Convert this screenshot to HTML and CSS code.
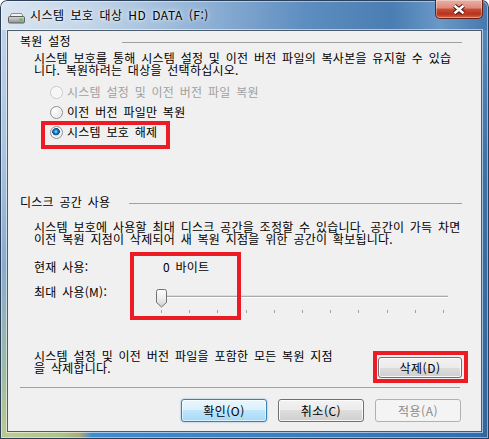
FILE: index.html
```html
<!DOCTYPE html>
<html lang="ko">
<head>
  <meta charset="UTF-8" />
  <title>시스템 보호 대상 HD DATA (F:)</title>
  <link rel="stylesheet" href="styles.css">
</head>
<body>

<div class="window">
  <div class="titlebar">
    <svg class="drive-icon" width="17" height="11" viewBox="0 0 17 11">
      <defs>
        <linearGradient id="driveBody" x1="0" y1="0" x2="0" y2="1">
          <stop offset="0" stop-color="#d9d9d9"/>
          <stop offset="1" stop-color="#8f8f8f"/>
        </linearGradient>
      </defs>
      <path d="M2 3.5 L3.5 0.5 H13.5 L15 3.5 Z" fill="#f2f2f2" stroke="#8c8c8c"/>
      <rect x="0.5" y="3.5" width="16" height="6.5" rx="1.2" fill="url(#driveBody)" stroke="#5f5f5f"/>
      <rect x="11.5" y="5.5" width="3" height="2" fill="#35d04a"/>
    </svg>
    <span class="title">시스템 보호 대상 HD DATA (F:)</span>
    <div class="close-btn">
      <svg width="14" height="11" viewBox="0 0 14 11">
        <path d="M2.5 1.8 L11.5 9.2 M11.5 1.8 L2.5 9.2" stroke="#4a140c" stroke-width="4.4"/>
        <path d="M2.5 1.8 L11.5 9.2 M11.5 1.8 L2.5 9.2" stroke="#fff" stroke-width="2.4"/>
      </svg>
    </div>
  </div>

  <div class="client">
    <!-- 복원 설정 -->
    <div class="group-head">
      <span class="group-label label-restore">복원 설정</span>
      <span class="group-rule"></span>
    </div>
    <p class="desc">시스템 보호를 통해 시스템 설정 및 이전 버전 파일의 복사본을 유지할 수 있습<br>니다. 복원하려는 대상을 선택하십시오.</p>

    <div class="radios">
      <div class="radio disabled"><span class="radio-dot"></span>시스템 설정 및 이전 버전 파일 복원</div>
      <div class="radio"><span class="radio-dot"></span>이전 버전 파일만 복원</div>
      <div class="radio checked"><span class="radio-dot"></span>시스템 보호 해제</div>
    </div>

    <!-- 디스크 공간 사용 -->
    <div class="group-head head-disk">
      <span class="group-label label-disk">디스크 공간 사용</span>
      <span class="group-rule"></span>
    </div>
    <p class="desc desc-disk">시스템 보호에 사용할 최대 디스크 공간을 조정할 수 있습니다. 공간이 가득 차면<br>이전 복원 지점이 삭제되어 새 복원 지점을 위한 공간이 확보됩니다.</p>

    <div class="usage-row">
      <span class="usage-label">현재 사용:</span>
      <span class="usage-value">0 바이트</span>
    </div>
    <div class="usage-row usage-max">
      <span class="usage-label">최대 사용(M):</span>
      <div class="slider">
        <div class="slider-track"></div>
        <div class="ticks">
          <span></span><span></span><span></span><span></span><span></span><span></span>
          <span></span><span></span><span></span><span></span><span></span>
        </div>
        <svg class="thumb" width="11" height="19" viewBox="0 0 11 19">
          <defs>
            <linearGradient id="thumbFill" x1="0" y1="0" x2="0" y2="1">
              <stop offset="0" stop-color="#fdfdfd"/>
              <stop offset="0.55" stop-color="#ececec"/>
              <stop offset="1" stop-color="#cfcfcf"/>
            </linearGradient>
          </defs>
          <path d="M0.5 2.5 Q0.5 0.5 2.5 0.5 H8.5 Q10.5 0.5 10.5 2.5 V13.5 L5.5 18 L0.5 13.5 Z" fill="url(#thumbFill)" stroke="#727272"/>
        </svg>
      </div>
    </div>

    <div class="delete-row">
      <p class="delete-text">시스템 설정 및 이전 버전 파일을 포함한 모든 복원 지점<br>을 삭제합니다.</p>
      <button class="btn btn-delete">삭제(D)</button>
    </div>

    <div class="separator"></div>

    <div class="buttons">
      <button class="btn btn-default">확인(O)</button>
      <button class="btn">취소(C)</button>
      <button class="btn" disabled>적용(A)</button>
    </div>
  </div>

  <!-- red highlight boxes drawn over the dialog -->
  <div class="mark mark-radio"></div>
  <div class="mark mark-usage"></div>
  <div class="mark mark-delete"></div>
</div>

</body>
</html>
```

FILE: styles.css
```css
body {
  margin: 0;
  background: #fff;
  font-family: "Noto Sans CJK KR", "Noto Sans", sans-serif;
  font-size: 12px;
  color: #000;
}

/* window frame */
.window {
  position: relative;
  width: 489px;
  height: 439px;
  box-sizing: border-box;
  border-radius: 7px 7px 0 0;
  overflow: hidden;
  background:
    linear-gradient(to right, #dbe6f1 0%, #c3d5e8 18%, #8fb1d5 42%, #5e8ec0 62%, #4a7db3 80%, #6a98c7 90%, #4677ad 100%) top left / 100% 30px no-repeat,
    linear-gradient(to bottom, #c3d6ea 0%, #a9c4df 35%, #88abd0 60%, #9dbba4 85%, #bcc98f 100%) top left / 8px 100% no-repeat,
    linear-gradient(to bottom, #5a8bbe 0%, #3c71a9 40%, #2f67a3 100%) top right / 8px 100% no-repeat,
    linear-gradient(to right, #c0cb94 0, #aec487 60px, #a9ab7a 80px, #3f8cd3 92px, #3a7fc2 60%, #2f6db0 100%) bottom left / 100% 8px no-repeat,
    #6d9ac8;
  box-shadow: inset 0 0 0 1px #2b4058, inset 0 0 0 2px rgba(255, 255, 255, 0.45);
}

.titlebar {
  display: flex;
  align-items: flex-start;
  height: 30px;
  padding-left: 8px;
  box-sizing: border-box;
}
.drive-icon {
  margin-top: 13px;
  flex-shrink: 0;
}
.title {
  margin: 8px 0 0 5px;
  line-height: 13px;
  word-spacing: 2px;
  letter-spacing: 0.5px;
  text-shadow: 0 0 6px rgba(255, 255, 255, 0.9), 0 0 3px rgba(255, 255, 255, 0.8);
}
.close-btn {
  margin-left: auto;
  margin-right: 6px;
  width: 48px;
  height: 19px;
  box-sizing: border-box;
  display: flex;
  align-items: center;
  justify-content: center;
  border: 1px solid #6a2117;
  border-top: none;
  border-radius: 0 0 5px 5px;
  background: linear-gradient(to bottom, #eab0a3 0%, #dc8a7a 45%, #c94f39 50%, #b8321c 78%, #d4694a 100%);
  box-shadow: inset 0 0 0 1px rgba(255, 255, 255, 0.35);
}

/* client area */
.client {
  margin: 0 7px;
  height: 402px;
  box-sizing: border-box;
  border: 1px solid #4d5b6a;
  background: #f0f0f0;
  padding: 4px 19px 0 12px;
  box-shadow: 0 0 0 1px rgba(255, 255, 255, 0.55);
  letter-spacing: 0.25px;
  word-spacing: 2px;
}

.group-head {
  display: flex;
  height: 12px;
  line-height: 12px;
}
.head-disk {
  margin-top: 54px;
}
.group-label {
  flex-shrink: 0;
}
.label-restore {
  width: 102px;
}
.label-disk {
  width: 109px;
}
.group-rule {
  flex: 1;
  height: 1px;
  margin-top: 7px;
  background: #a0a0a0;
}

.desc {
  margin: 5px 0 0 14px;
  line-height: 12px;
  white-space: nowrap;
}
.desc-disk {
  margin-top: 13px;
}

.radios {
  margin: 6px 0 0 30px;
}
.radio {
  display: flex;
  align-items: center;
  gap: 4px;
  height: 20px;
  line-height: 12px;
}
.radio-dot {
  width: 13px;
  height: 13px;
  box-sizing: border-box;
  border-radius: 50%;
  border: 1px solid #8e8f8f;
  background: radial-gradient(circle at 35% 35%, #ffffff 0, #ececec 55%, #d2d2d2 100%);
  box-shadow: inset 0 0 0 1px rgba(255, 255, 255, 0.7);
}
.radio.disabled {
  color: #a0a0a0;
}
.radio.disabled .radio-dot {
  border-color: #c8c8c8;
  background: #f6f6f6;
}
.radio.checked .radio-dot {
  background:
    radial-gradient(circle at 45% 42%, #9be2ff 0, #2a8fd2 1.6px, #0d5a94 3px, #0b3f6b 3.6px, rgba(11, 63, 107, 0) 4px),
    radial-gradient(circle at 35% 35%, #ffffff 0, #ececec 55%, #d2d2d2 100%);
}

.usage-row {
  display: flex;
  align-items: flex-start;
  margin: 16px 0 0 14px;
  line-height: 12px;
}
.usage-max {
  margin-top: 13px;
}
.usage-label {
  width: 129px;
  flex-shrink: 0;
}

.slider {
  position: relative;
  width: 292px;
  height: 24px;
  margin: 3px 0 0 -7px;
}
.slider-track {
  margin: 7px 0 0 4px;
  height: 1px;
  background: #ababab;
  box-shadow: 0 1px 0 #ffffff, 0 -1px 0 #dcdcdc;
}
.ticks {
  display: flex;
  justify-content: space-between;
  margin-top: 13px;
  padding: 0 4px 0 5px;
}
.ticks span {
  width: 1px;
  height: 3px;
  background: #a0a0a0;
}
.thumb {
  position: absolute;
  left: 0;
  top: 0;
}

.delete-row {
  display: flex;
  justify-content: space-between;
  align-items: flex-start;
  margin: 37px 0 0 14px;
}
.delete-text {
  margin: 0;
  line-height: 12px;
  white-space: nowrap;
}

.separator {
  margin: 9px 2px 0 0;
  height: 1px;
  background: #a0a0a0;
}

.buttons {
  display: flex;
  justify-content: flex-end;
  gap: 11px;
  margin: 11px 1px 0 0;
}

.btn {
  width: 86px;
  height: 23px;
  box-sizing: border-box;
  padding: 0;
  font: inherit;
  line-height: 12px;
  letter-spacing: 0.5px;
  color: #000;
  border: 1px solid #707070;
  border-radius: 3px;
  background: linear-gradient(to bottom, #f2f2f2 0%, #ebebeb 50%, #dddddd 50%, #cfcfcf 100%);
  box-shadow: inset 0 0 0 1px rgba(255, 255, 255, 0.8);
}
.btn-delete {
  width: 84px;
  height: 21px;
  margin-top: 7px;
}
.btn-default {
  border-color: #3c7fb1;
  background: linear-gradient(to bottom, #eaf6fd 0%, #d9f0fc 50%, #bee6fd 50%, #a7d9f5 100%);
  box-shadow: inset 0 0 0 1px rgba(255, 255, 255, 0.6), 0 0 2px rgba(74, 160, 216, 0.7);
}
.btn:disabled {
  border-color: #adb2b5;
  background: #f4f4f4;
  color: #8a8a8a;
  box-shadow: none;
}

/* red highlight boxes */
.mark {
  position: absolute;
  box-sizing: border-box;
  border: 4px solid #ed1c24;
}
.mark-radio {
  left: 41px;
  top: 121px;
  width: 129px;
  height: 28px;
}
.mark-usage {
  left: 130px;
  top: 252px;
  width: 111px;
  height: 68px;
}
.mark-delete {
  left: 373px;
  top: 351px;
  width: 95px;
  height: 32px;
}
```
